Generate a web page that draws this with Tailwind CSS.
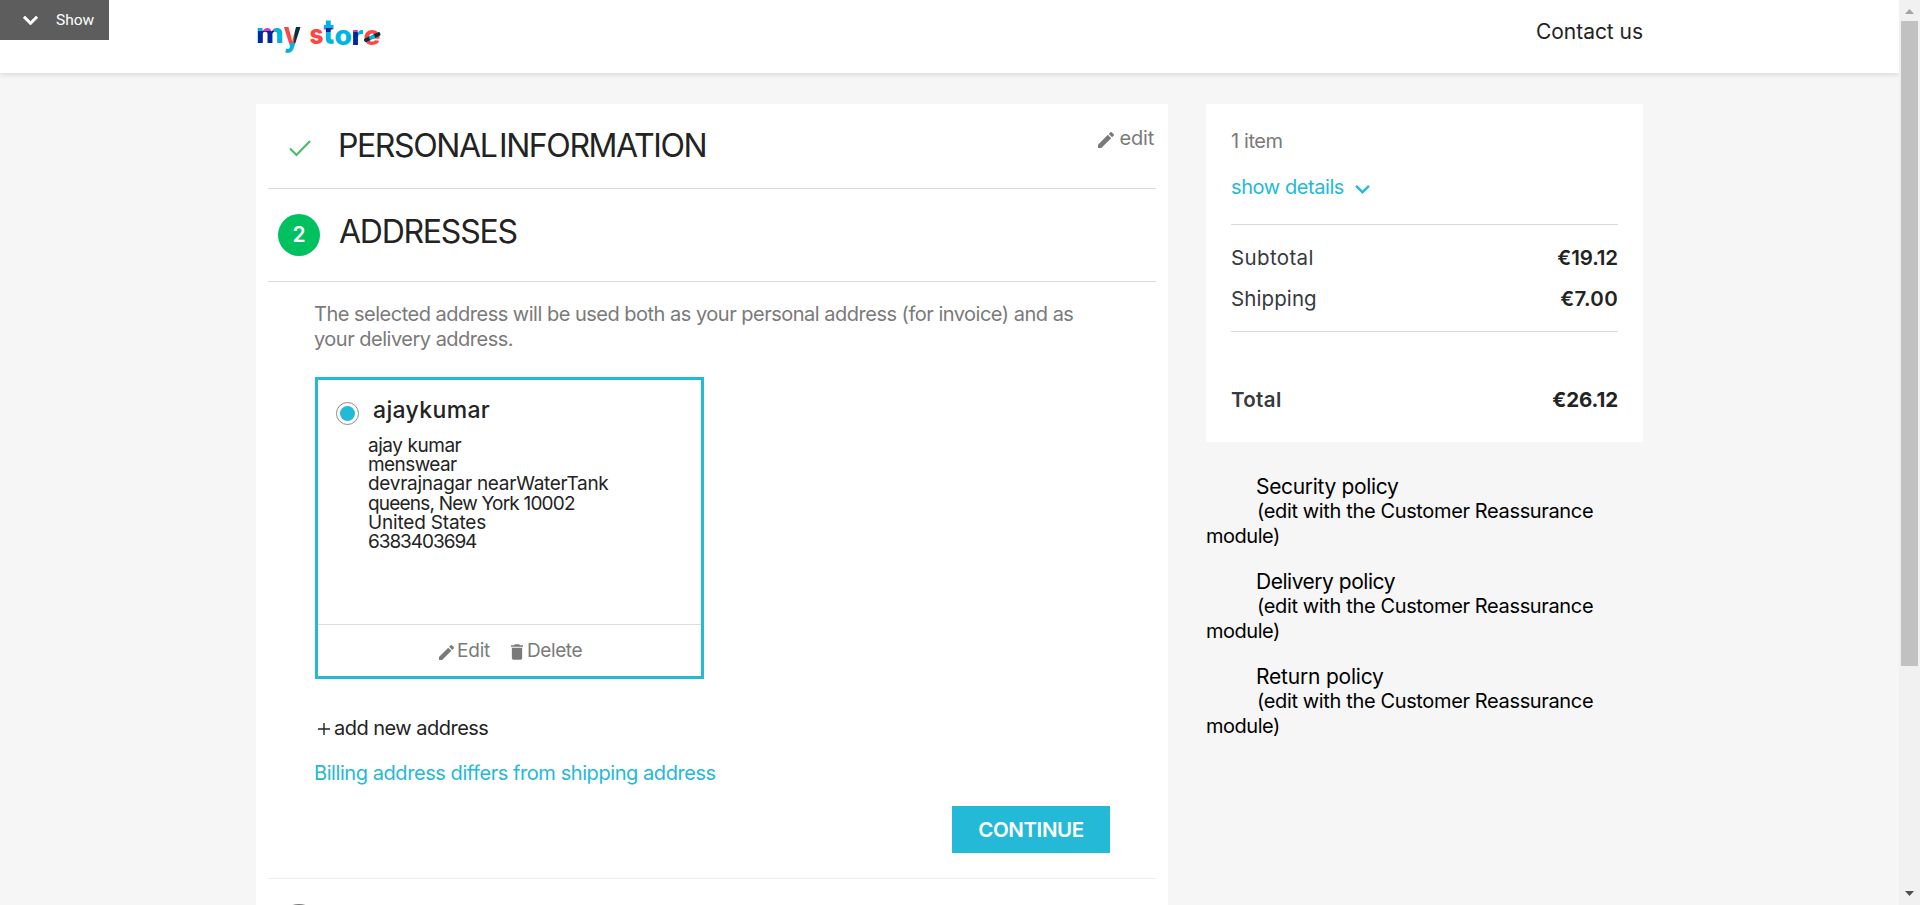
<!DOCTYPE html>
<html lang="en">
<head>
<meta charset="utf-8">
<title>my store</title>
<script src="https://cdn.jsdelivr.net/npm/@tailwindcss/browser@4"></script>
</head>
<body class="h-[905px] overflow-hidden bg-[#f6f6f6] font-['Inter',sans-serif] text-[#232323]">
<svg width="0" height="0" class="absolute">
  <defs>
    <symbol id="pencil" viewBox="3 3 18 18"><path d="M3 17.25V21h3.75L17.81 9.94l-3.75-3.75L3 17.25zM20.71 7.04a1 1 0 0 0 0-1.41l-2.34-2.34a1 1 0 0 0-1.41 0l-1.83 1.83 3.75 3.75 1.83-1.83z"/></symbol>
    <symbol id="trash" viewBox="5 3 14 18"><path d="M6 19c0 1.1.9 2 2 2h8c1.1 0 2-.9 2-2V7H6v12zM19 4h-3.500l-1-1h-5l-1 1H5v2h14V4z"/></symbol>
    <symbol id="chevron" viewBox="6 8.590 12 7.410"><path d="M7.410 8.590 12 13.170l4.590-4.580L18 10l-6 6-6-6z"/></symbol>
  </defs>
</svg>
<div class="flex h-full">
  <div class="h-full flex-1">
    <header class="relative flex h-[73px] bg-white pl-[256px] shadow-[0_2px_5px_0_rgba(0,0,0,0.11)]">
      <svg class="mt-[15px] h-[42px] w-[126px]" viewBox="256 15 126 42" font-family="Inter" font-weight="800" font-size="27.500">
        <defs>
          <clipPath id="m"><text x="256" y="43" textLength="28" lengthAdjust="spacingAndGlyphs">m</text></clipPath>
          <clipPath id="y"><text x="283.500" y="46" font-size="34" font-weight="700" textLength="17.500" lengthAdjust="spacingAndGlyphs">y</text></clipPath>
          <clipPath id="t"><text x="323.500" y="44" font-size="35" textLength="11" lengthAdjust="spacingAndGlyphs">t</text></clipPath>
          <clipPath id="r"><text x="351.500" y="45" textLength="12" lengthAdjust="spacingAndGlyphs">r</text></clipPath>
          <clipPath id="e"><text x="363.500" y="44.500" textLength="17" lengthAdjust="spacingAndGlyphs">e</text></clipPath>
        </defs>
        <g clip-path="url(#m)"><rect x="256" y="15" width="30" height="42" fill="#00b5e2"/><rect x="258" y="31" width="16" height="14" fill="#0026a1"/><rect x="262" y="26" width="12" height="5" fill="#da3ab3"/></g>
        <g clip-path="url(#y)"><rect x="282" y="15" width="20" height="28" fill="#ff4642"/><path d="M295 27h7v16h-8z" fill="#00343b"/><rect x="282" y="43" width="20" height="12" fill="#00b5e2"/></g>
        <text x="309.500" y="44" fill="#ff4642" textLength="14" lengthAdjust="spacingAndGlyphs">s</text>
        <g clip-path="url(#t)"><rect x="323" y="15" width="14" height="34" fill="#00b5e2"/><rect x="323" y="28" width="10" height="4" fill="#c23bb8"/><rect x="326" y="28" width="6" height="4" fill="#0026a1"/></g>
        <text x="334.500" y="44.500" fill="#00b5e2" textLength="17.500" lengthAdjust="spacingAndGlyphs">o</text>
        <g clip-path="url(#r)"><rect x="352" y="15" width="14" height="34" fill="#0026a1"/><rect x="352" y="28" width="6" height="4" fill="#da3ab3"/><rect x="358" y="28" width="8" height="8" fill="#00b5e2"/></g>
        <g clip-path="url(#e)"><rect x="363" y="15" width="18" height="34" fill="#ff4642"/></g>
        <path d="m366 40 3.500-1.500M374.500 36l4-1.800" stroke="#00343b" stroke-width="4" stroke-linecap="round"/>
        <path d="m369.500 38.500 5-2.500" stroke="#00b5e2" stroke-width="4"/>
      </svg>
      <a class="mt-5 ml-[1154px] text-[21px] leading-6 tracking-[-0.04px] whitespace-nowrap">Contact us</a>
      <div class="absolute top-0 left-0 flex h-10 w-[109px] items-center bg-[#5d5d5d] pl-[23px] font-['Roboto',sans-serif] text-[15.500px] text-white">
        <svg class="mr-[18px] h-[9px] w-[15px] fill-white stroke-white stroke-[0.6]"><use href="#chevron"/></svg><span class="pt-px">Show</span>
      </div>
    </header>
    <main class="flex pt-[31px] pl-[256px]">
      <section class="h-[801px] w-[912px] overflow-hidden bg-white px-3">
        <div class="flex h-[85px] border-b border-[#d9d9d9] pl-[21px]">
          <svg class="mt-9 h-[17px] w-[22px]" viewBox="0 0 22 17" fill="none" stroke="#4cbb6c" stroke-width="2.200"><path d="m1 8.500 6.500 6.500L21 1"/></svg>
          <h1 class="mt-[22px] ml-[27px] text-[32px] leading-10 tracking-[-1.400px] whitespace-nowrap [word-spacing:-5px]">PERSONAL INFORMATION</h1>
          <span class="mt-[25px] mr-[2px] ml-auto flex text-xl leading-[26px] text-[#7a7a7a]"><svg class="mt-[3px] mr-[6px] h-4 w-4 fill-[#7a7a7a]"><use href="#pencil"/></svg><span class="-mt-[4px] tracking-[-0.2px]">edit</span></span>
        </div>
        <div class="flex h-[93px] border-b border-[#d9d9d9] pl-[10px]">
          <span class="mt-[25px] flex h-[42px] w-[42px] items-center justify-center rounded-full bg-[#00c160] text-[21px] font-semibold text-white">2</span>
          <h1 class="mt-[23px] ml-[19px] text-[32px] leading-10 tracking-[-1.250px]">ADDRESSES</h1>
        </div>
        <div class="pt-5 pl-[47px]">
          <p class="-ml-px text-xl leading-[25px] tracking-[-0.5px] whitespace-nowrap text-[#7a7a7a]">The selected address will be used both as your personal address (for invoice) and as<br>your delivery address.</p>
          <article class="mt-[25px] flex h-[302px] w-[389px] flex-col border-3 border-[#24b9d7] pt-[15px]">
            <div class="flex pl-[18px]">
              <span class="mt-[7px] flex h-[23px] w-[23px] items-center justify-center rounded-full border border-[#8c8c8c]"><i class="h-[15px] w-[15px] rounded-full bg-[#24b9d7]"></i></span>
              <h4 class="ml-[14px] text-[23px] leading-[30px] font-medium tracking-[0.350px]">ajaykumar</h4>
            </div>
            <address class="mt-[11px] flex-1 pl-[50px] text-[19px] leading-[19.200px] whitespace-nowrap not-italic">
              <div class="tracking-[-0.450px]">ajay kumar</div>
              <div class="tracking-[-0.580px]">menswear</div>
              <div class="tracking-[-0.270px]">devrajnagar nearWaterTank</div>
              <div class="tracking-[-0.800px]">queens, New York 10002</div>
              <div class="tracking-[-0.180px]">United States</div>
              <div class="tracking-[-1.050px]">6383403694</div>
            </address>
            <footer class="flex h-[52px] items-center border-t border-[#ddd] pl-[121px] text-[19px] text-[#7a7a7a]">
              <svg class="mt-[3px] mr-[3px] h-[15px] w-[15px] fill-[#7a7a7a]"><use href="#pencil"/></svg><span class="w-[33px] pt-[2px] tracking-[-0.2px]">Edit</span>
              <svg class="mt-[3px] mr-1 ml-[21px] h-4 w-3 fill-[#7a7a7a]"><use href="#trash"/></svg><span class="pt-[2px] tracking-[-0.4px]">Delete</span>
            </footer>
          </article>
          <p class="mt-9 flex items-center pl-[3px] text-xl leading-[26px] tracking-[-0.520px]"><svg class="mt-[2px] mr-1 h-3 w-3" viewBox="0 0 12 12" stroke="#232323" stroke-width="1.400"><path d="M6 0v12M0 6h12"/></svg>add new address</p>
          <p class="mt-[19px] -ml-px text-xl leading-[26px] tracking-[-0.430px] text-[#24b9d7]">Billing address differs from shipping address</p>
          <button class="mt-5 ml-[637px] block h-[47px] w-[158px] bg-[#24b9d7] pt-[2px] text-[20.500px] font-semibold tracking-[-0.4px] text-white">CONTINUE</button>
        </div>
        <div class="mt-[25px] border-t border-[#ededed] pt-[25px] pl-[10px]"><span class="block h-[42px] w-[42px] rounded-full border-2 border-[#7a7a7a]"></span></div>
      </section>
      <aside class="ml-[38px] w-[437px]">
        <div class="h-[338px] bg-white px-[25px] pt-6 text-[20.500px] leading-[26px]">
          <p class="text-xl leading-[26px] tracking-[-0.4px] text-[#7a7a7a]">1 item</p>
          <p class="mt-5 flex text-xl leading-[26px] tracking-[-0.420px] text-[#24b9d7]">show details<svg class="mt-[11px] ml-[11px] h-[9px] w-[15px] fill-[#24b9d7]"><use href="#chevron"/></svg></p>
          <div class="mt-6 flex justify-between border-t border-[#d9d9d9] pt-5"><span class="tracking-[0.350px] text-[#363a41]">Subtotal</span><b class="font-semibold tracking-[-0.1px]">€19.12</b></div>
          <div class="mt-[15px] flex h-[46px] justify-between border-b border-[#d9d9d9]"><span class="tracking-[0.1px] text-[#363a41]">Shipping</span><b class="font-semibold tracking-[0.3px]">€7.00</b></div>
          <div class="mt-[55px] flex justify-between"><b class="font-semibold tracking-[0.350px] text-[#363a41]">Total</b><b class="font-bold tracking-[-0.1px]">€26.12</b></div>
        </div>
        <div class="mt-8 flex flex-col gap-5 text-xl leading-[25px] text-black">
          <div><p class="pl-[50px] text-[21px] leading-[25px] tracking-[-0.330px]">Security policy</p><p class="indent-[51px] tracking-[-0.360px]">(edit with the Customer Reassurance</p><p class="tracking-[-0.480px]">module)</p></div>
          <div><p class="pl-[50px] text-[21px] leading-[25px] tracking-[-0.480px]">Delivery policy</p><p class="indent-[51px] tracking-[-0.360px]">(edit with the Customer Reassurance</p><p class="tracking-[-0.480px]">module)</p></div>
          <div><p class="pl-[50px] text-[21px] leading-[25px] tracking-[-0.2px]">Return policy</p><p class="indent-[51px] tracking-[-0.360px]">(edit with the Customer Reassurance</p><p class="tracking-[-0.480px]">module)</p></div>
        </div>
      </aside>
    </main>
  </div>
  <div class="relative z-10 flex h-full w-[21px] flex-col items-center bg-[#f1f1f1]">
    <svg class="mt-[9px] h-[5px] w-[9px]" viewBox="0 0 9 5" fill="#a3a3a3"><path d="M4.500 0 9 5H0z"/></svg>
    <div class="mt-[7px] h-[645px] w-[17px] bg-[#c1c1c1]"></div>
    <svg class="mt-auto mb-[9px] h-[5px] w-[9px]" viewBox="0 0 9 5" fill="#505050"><path d="M0 0h9L4.500 5z"/></svg>
  </div>
</div>
</body>
</html>
